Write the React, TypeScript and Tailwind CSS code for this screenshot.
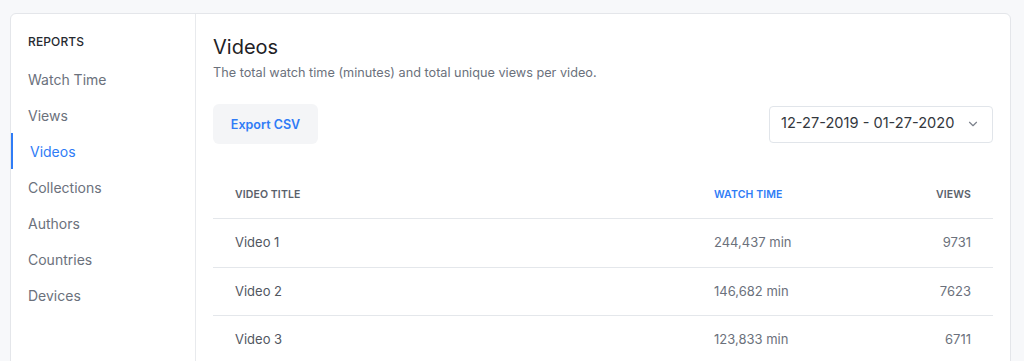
import { ChevronDown } from "lucide-react";

const nav = ["Watch Time", "Views", "Videos", "Collections", "Authors", "Countries", "Devices"];

const rows = [
  { title: "Video 1", time: "244,437 min", views: "9731" },
  { title: "Video 2", time: "146,682 min", views: "7623" },
  { title: "Video 3", time: "123,833 min", views: "6711" },
];

export default function App() {
  return (
    <div className="h-[361px] w-[1024px] overflow-hidden bg-[#f7f8fa] pt-[13px] pl-[10px] font-['Inter',sans-serif]">
      <div className="flex h-[400px] w-[1001px] rounded-md border border-[#e4e6ea] bg-white">
        <aside className="w-[185px] shrink-0 border-r border-[#e8eaed] pt-[20px]">
          <div className="pl-[17px] text-[12px] font-medium leading-[16px] tracking-[0.01em] text-[#262a30]">
            REPORTS
          </div>
          <ul className="mt-[11px]">
            {nav.map((item) => {
              const active = item === "Videos";
              return (
                <li
                  key={item}
                  className={
                    active
                      ? "flex h-[36px] items-center border-l-2 border-[#2f7cf6] pl-[17px] text-[14px] text-[#2f7cf6]"
                      : "flex h-[36px] items-center pl-[17px] text-[14px] text-[#6b717c]"
                  }
                >
                  {item}
                </li>
              );
            })}
          </ul>
        </aside>
        <main className="flex-1 px-[17px] pt-[19px]">
          <h1 className="text-[20px] leading-[28px] text-[#1f2226]">Videos</h1>
          <p className="mt-[2px] text-[12.7px] leading-[20px] text-[#6b717c]">
            The total watch time (minutes) and total unique views per video.
          </p>
          <div className="mt-[21px] flex items-center justify-between">
            <button className="h-[40px] w-[105px] rounded-md bg-[#f4f5f7] pt-[2px] text-[12.5px] font-semibold text-[#2f7cf6]">
              Export CSV
            </button>
            <div className="flex h-[37px] w-[224px] items-center justify-between rounded border border-[#e1e5ea] pr-[12px] pl-[11px] text-[14.6px] text-[#33373d]">
              <span>12-27-2019 - 01-27-2020</span>
              <ChevronDown size={14} strokeWidth={2} className="text-[#7c828c]" />
            </div>
          </div>
          <div className="mt-[27px]">
            <div className="grid h-[48px] grid-cols-[479px_1fr_auto] items-center border-b border-[#e4e7eb] px-[22px] text-[10.5px] font-semibold tracking-[0.01em] text-[#5a616b]">
              <span>VIDEO TITLE</span>
              <span className="text-[#2f7cf6]">WATCH TIME</span>
              <span className="text-right">VIEWS</span>
            </div>
            {rows.map((r) => (
              <div
                key={r.title}
                className="grid h-[48.5px] grid-cols-[479px_1fr_auto] items-center border-b border-[#e4e7eb] px-[22px] text-[13px] text-[#52575f]"
              >
                <span>{r.title}</span>
                <span className="text-[#6b717c]">{r.time}</span>
                <span className="text-right text-[#6b717c]">{r.views}</span>
              </div>
            ))}
          </div>
        </main>
      </div>
    </div>
  );
}
